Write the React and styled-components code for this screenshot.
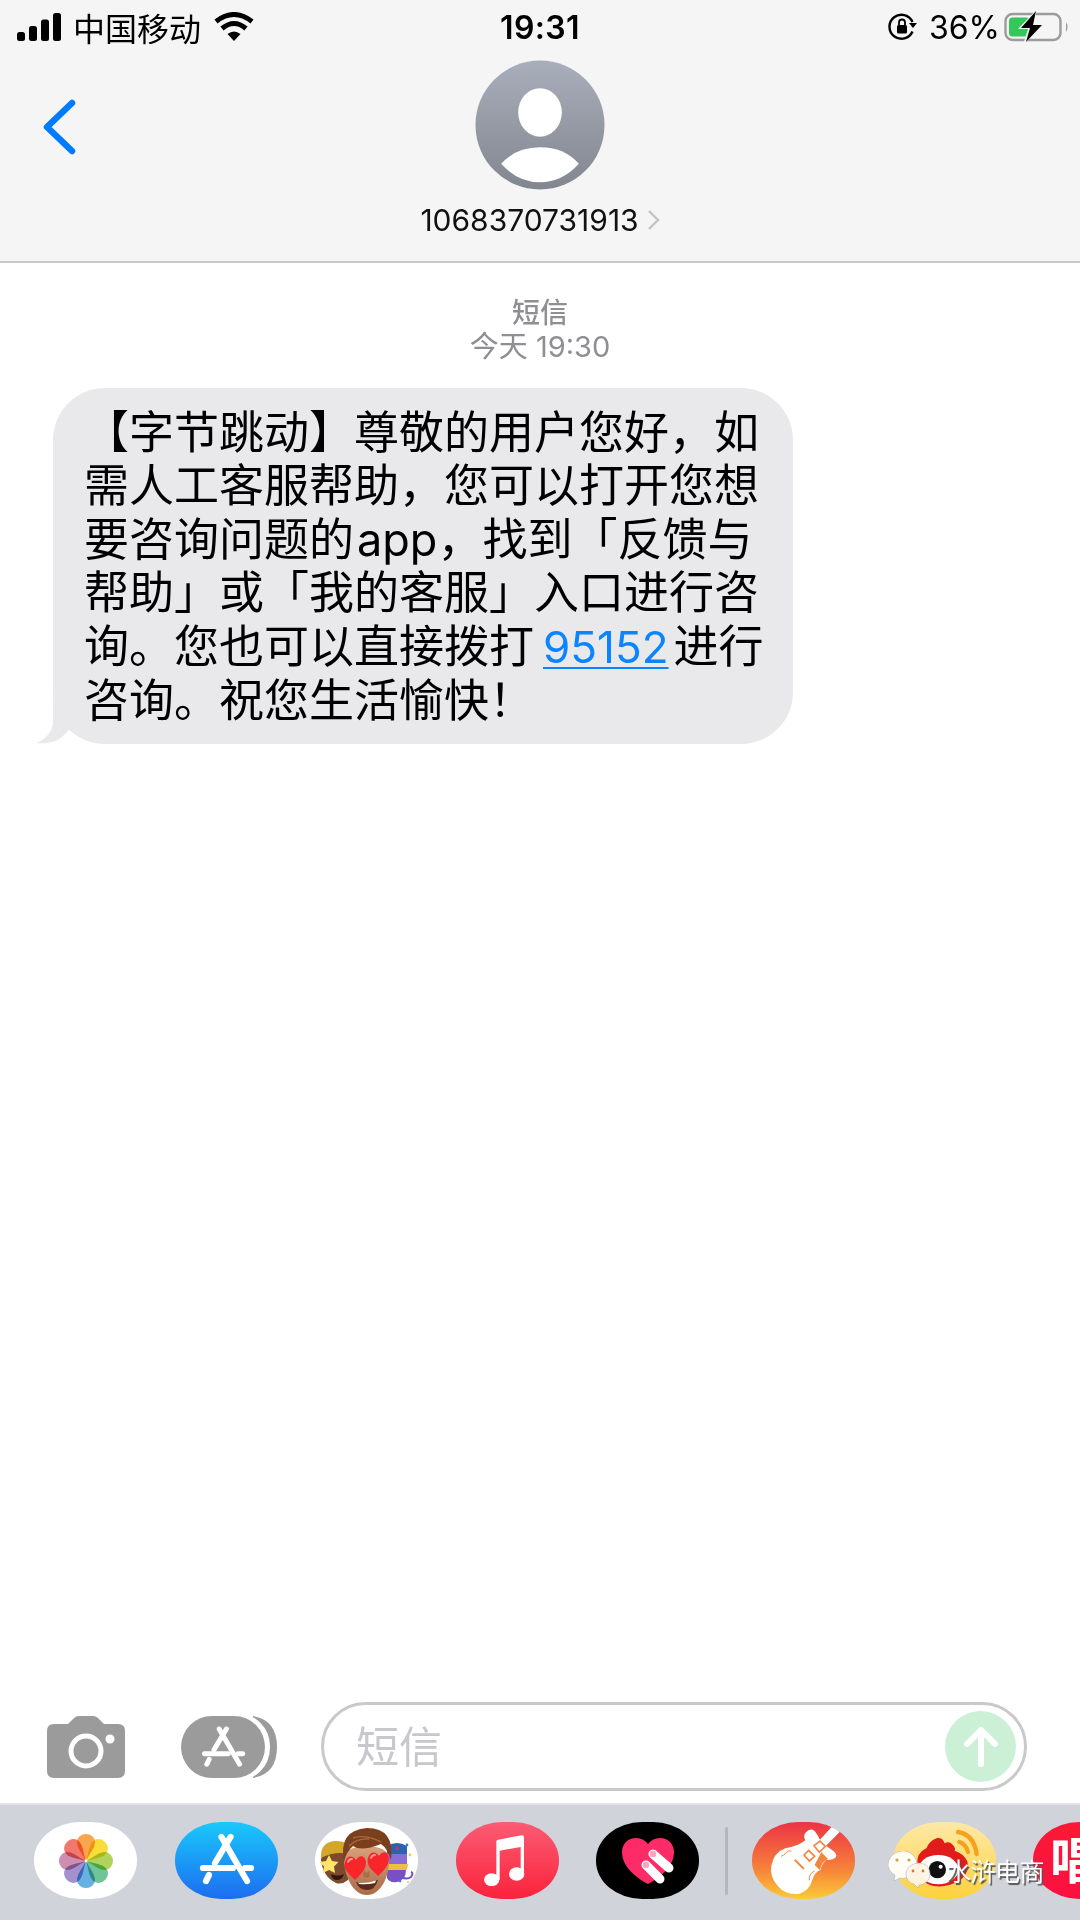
import React from 'react'
import styled, { createGlobalStyle } from 'styled-components'

const GlobalStyle = createGlobalStyle`
  html, body {
    margin: 0;
    padding: 0;
    background: #fff;
    font-family: Inter, "Noto Sans CJK SC", sans-serif;
  }
`

const Screen = styled.div`
  width: 1080px;
  height: 1920px;
  display: flex;
  flex-direction: column;
  overflow: hidden;
  position: relative;
  background: #fff;
`

const Header = styled.header`
  height: 261px;
  flex: none;
  background: #f5f5f5;
  border-bottom: 2px solid #c9c9c9;
  display: flex;
  flex-direction: column;
`

const StatusBar = styled.div`
  height: 54px;
  padding: 0 10px;
  display: grid;
  grid-template-columns: 1fr auto 1fr;
  align-items: center;
  color: #000;
`

const StatusLeft = styled.div`
  display: flex;
  align-items: center;
  padding-left: 7px;
`

const StatusRight = styled.div`
  display: flex;
  align-items: center;
  justify-content: flex-end;
`

const Carrier = styled.span`
  font: 400 32px "Noto Sans CJK SC", sans-serif;
  line-height: 54px;
  margin: 0 13px 0 11px;
`

const Clock = styled.span`
  font: 600 32px Inter, sans-serif;
  letter-spacing: 0.4px;
`

const Percent = styled.span`
  font: 400 32px Inter, sans-serif;
  margin: 0 4px 0 11px;
`

const ContactBar = styled.div`
  position: relative;
  flex: 1;
  display: flex;
  flex-direction: column;
  align-items: center;
`

const BackButton = styled.svg`
  position: absolute;
  left: 40px;
  top: 44px;
`

const Avatar = styled.svg`
  margin-top: 6px;
  display: block;
`

const ContactName = styled.div`
  display: flex;
  align-items: center;
  gap: 8px;
  margin-top: 12px;
  font: 400 30px Inter, sans-serif;
  color: #111;
  line-height: 36px;
`

const Messages = styled.main`
  flex: 1;
  padding-top: 33px;
`

const Meta = styled.div`
  margin-bottom: 24px;
  text-align: center;
  color: #8e8e93;
  line-height: 34px;
`

const MetaKind = styled.div`
  font-size: 28px;
  font-weight: 500;
`

const MetaTime = styled.div`
  font-size: 29px;
`

const BubbleRow = styled.div`
  padding-left: 53px;
`

const Bubble = styled.div`
  position: relative;
  width: 677px;
  padding: 18px 32px 17px 31px;
  background: #e9e9eb;
  border-radius: 52px;
  font: 400 45px/53.4px Inter, "Noto Sans CJK SC", sans-serif;
  color: #000;
`

const Line = styled.div`
  white-space: nowrap;
`

const Latin = styled.span`
  margin-left: 3px;
`

const Tail = styled.svg`
  position: absolute;
  left: -16px;
  bottom: 0;
`

const PhoneLink = styled.a`
  color: #0a84ff;
  font-size: 44px;
  margin: 0 5px 0 9px;
  text-decoration: underline;
  text-decoration-thickness: 2px;
  text-underline-offset: 4px;
`

const Composer = styled.div`
  flex: none;
  height: 101px;
  padding: 0 0 12px 47px;
  box-sizing: border-box;
  display: flex;
  align-items: center;
`

const ComposerIcon = styled.svg`
  display: block;
  flex: none;
  margin-right: ${p => p.$gap}px;
`

const InputPill = styled.div`
  width: 706px;
  height: 89px;
  box-sizing: border-box;
  border: 3px solid #c9c9c9;
  border-radius: 45px;
  display: flex;
  align-items: center;
  justify-content: space-between;
  padding: 0 8px 0 32px;
`

const Placeholder = styled.span`
  font: 400 43px/1 "Noto Sans CJK SC", sans-serif;
  color: #c7c7cc;
  margin-top: -4px;
`

const SendButton = styled.div`
  width: 71px;
  height: 71px;
  border-radius: 50%;
  background: #ccf0d6;
  display: flex;
  align-items: center;
  justify-content: center;
`

const Dock = styled.nav`
  flex: none;
  height: 117px;
  box-sizing: border-box;
  background: #d0d3d9;
  border-top: 2px solid #e3e4e8;
  padding: 17px 0 0 34px;
  display: flex;
  align-items: flex-start;
  gap: 37.5px;
`

const AppIcon = styled.div`
  position: relative;
  flex: none;
  width: 103px;
  height: 77px;
  border-radius: 46px / 38px;
  background: ${p => p.$bg};
  overflow: hidden;
  display: flex;
  align-items: center;
  justify-content: center;
`

const DockDivider = styled.div`
  flex: none;
  width: 3px;
  height: 68px;
  margin: 5px -13.5px 0 -11.5px;
  background: #b4b6bb;
  border-radius: 2px;
`

const SingGlyph = styled.span`
  position: absolute;
  left: 17px;
  top: 3px;
  font: 700 50px/1.3 "Noto Sans CJK SC", sans-serif;
  color: #fff;
`

const Petal = styled.path`
  mix-blend-mode: multiply;
  opacity: 0.92;
`

const Watermark = styled.div`
  position: absolute;
  left: 888px;
  top: 1851px;
  display: flex;
  align-items: center;
`

const WatermarkText = styled.span`
  font: 400 25px "Noto Sans CJK SC", sans-serif;
  color: #fff;
  margin-left: 14px;
  letter-spacing: -0.5px;
  text-shadow: 1.5px 1.5px 1px #555;
  white-space: nowrap;
`

function SignalIcon() {
  return (
    <svg width="45" height="28" viewBox="0 0 45 28">
      <rect x="0" y="19" width="8" height="9" rx="2.5" fill="#000" />
      <rect x="12" y="13" width="8" height="15" rx="2.5" fill="#000" />
      <rect x="24" y="6.5" width="8" height="21.5" rx="2.5" fill="#000" />
      <rect x="36" y="0" width="8" height="28" rx="2.5" fill="#000" />
    </svg>
  )
}

function WifiIcon() {
  return (
    <svg width="40" height="30" viewBox="0 0 40 30">
      <path d="M20 29 L13.5 22 Q20 17 26.5 22 Z" fill="#000" />
      <path d="M8 16.5 Q20 6.5 32 16.5" fill="none" stroke="#000" strokeWidth="5" />
      <path d="M2 9.5 Q20 -4.5 38 9.5" fill="none" stroke="#000" strokeWidth="5" />
    </svg>
  )
}

function RotationLockIcon() {
  return (
    <svg width="30" height="28" viewBox="0 0 30 28">
      <path d="M24.5 18.5 A12 12 0 1 1 24.5 9" fill="none" stroke="#000" strokeWidth="2.4" />
      <path d="M21 10 L29 10 L25 15 Z" fill="#000" />
      <rect x="9" y="12" width="10" height="8.5" rx="1.5" fill="#000" />
      <path d="M11 12 V9.5 a3 3 0 0 1 6 0 V12" fill="none" stroke="#000" strokeWidth="1.8" />
    </svg>
  )
}

function BatteryIcon() {
  return (
    <svg width="66" height="32" viewBox="0 0 66 32">
      <rect x="1.5" y="3" width="55" height="26" rx="7" fill="none" stroke="#9b9b9b" strokeWidth="2.4" />
      <rect x="5" y="6.5" width="21" height="19" rx="3.5" fill="#34c759" />
      <path d="M62 11 q3 5 0 10 Z" fill="#9b9b9b" />
      <path d="M33 -2 L14 18 H24 L19 34 L40 13 H30 Z" fill="#f5f5f5" />
      <path d="M32 0 L17 17 H26 L22 31 L38 14 H29 Z" fill="#000" />
    </svg>
  )
}

function AvatarIcon() {
  return (
    <Avatar width="130" height="130" viewBox="0 0 134 134">
      <defs>
        <linearGradient id="avatarFill" x1="0" y1="0" x2="0" y2="1">
          <stop offset="0" stopColor="#a9aebb" />
          <stop offset="1" stopColor="#82868f" />
        </linearGradient>
      </defs>
      <circle cx="67" cy="67" r="66.5" fill="url(#avatarFill)" />
      <ellipse cx="67" cy="54" rx="22.5" ry="25" fill="#fff" />
      <path d="M27 107 Q42 90 67 90 Q92 90 107 107 Q90 126 67 126 Q44 126 27 107 Z" fill="#fff" />
    </Avatar>
  )
}

function AppStoreStrokes() {
  return (
    <g fill="none" stroke="#fff" strokeWidth="6.2" strokeLinecap="round">
      <path d="M46.5 15 L72 59" />
      <path d="M55.5 15 L40 41" />
      <path d="M34 53 L31 59" />
      <path d="M28 46 H58" />
      <path d="M70 46 H76" />
    </g>
  )
}

function AppStoreGlyph() {
  return (
    <svg width="103" height="77" viewBox="0 0 103 77">
      <AppStoreStrokes />
    </svg>
  )
}

function PhotosGlyph() {
  const petals = [
    ['#f9a03f', 0],
    ['#f7dc2a', 45],
    ['#a8d04f', 90],
    ['#63c08e', 135],
    ['#5aa9e0', 180],
    ['#9a88c8', 225],
    ['#c884aa', 270],
    ['#f06c63', 315],
  ]
  return (
    <svg width="56" height="56" viewBox="-28 -28 56 56">
      {petals.map(([color, angle]) => (
        <Petal
          key={angle}
          d="M0 0 C-4 -8 -9 -13 -9 -19 A9 8 0 0 1 9 -19 C9 -13 4 -8 0 0 Z"
          fill={color}
          transform={`rotate(${angle})`}
        />
      ))}
      <circle r="1.4" fill="#fff" />
    </svg>
  )
}

function MemojiGlyph() {
  return (
    <svg width="103" height="77" viewBox="0 0 103 77">
      <defs>
        <linearGradient id="skin" x1="0" y1="0" x2="0" y2="1">
          <stop offset="0" stopColor="#d8a27c" />
          <stop offset="1" stopColor="#a86c48" />
        </linearGradient>
      </defs>
      {/* genie on the right */}
      <path d="M72 24 q10 -6 20 0 v8 h-20 Z" fill="#2f62ad" />
      <circle cx="82" cy="26" r="1.6" fill="#d8304a" />
      <path d="M73 32 h19 v10 h-19 Z" fill="#8a6cd8" />
      <path d="M73 42 h20 l-1 6 h-19 Z" fill="#ecc03f" />
      <path d="M72 48 h19 q0 10 -9 12 q-8 1 -10 -4 Z" fill="#7a4fc4" />
      <path d="M86 55 q6 3 10 0 q3 -4 0 -5" fill="none" stroke="#7a4fc4" strokeWidth="2" />
      <circle cx="92" cy="23" r="1.4" fill="#3a7de0" />
      <circle cx="95" cy="33" r="1.4" fill="#f0d030" />
      <circle cx="85" cy="59" r="1.4" fill="#3a7de0" />
      <circle cx="93" cy="60" r="1" fill="#f0d030" />
      {/* face on the left */}
      <path d="M6 38 q0 -6 5 -10 h22 v30 q-6 5 -12 3 q-13 -6 -15 -23 Z" fill="#7c4a2c" />
      <path d="M6 36 q-1 -15 13 -17 q12 -1 16 6 l-1 7 q-14 -3 -28 4 Z" fill="#d2a72b" />
      <path d="M14 33 l3 6 l6.500 1 l-4.500 4.500 l1 6.500 l-6 -3 l-6 3 l1 -6.500 l-4.500 -4.500 l6.500 -1 Z" fill="#ffe36b" />
      <path d="M16 52 q7 3 13 0 q-2 6 -7 6 q-5 0 -6 -6 Z" fill="#2b1710" />
      {/* main face */}
      <path d="M29 36 C29 20 74 20 74 36 C75 54 66 73 52 73 C38 73 29 54 29 36 Z" fill="url(#skin)" />
      <path d="M29 40 Q23 8 52 6 Q80 6 76 38 Q72 26 66 22 Q46 30 38 24 Q31 30 29 40 Z" fill="#7a3f1d" />
      <path d="M38 16 Q50 12 66 20 M34 24 Q42 16 54 17" fill="none" stroke="#a8683a" strokeWidth="1.4" />
      <path d="M40 58 C34 52 28 48 30 40 C32 33 38 33 41 38 C44 32 51 33 51 41 C51 48 44 54 40 58 Z" fill="#f8262b" />
      <path d="M63 54 C57 48 51 44 53 36 C55 29 61 29 64 34 C67 28 74 29 74 37 C74 44 67 50 63 54 Z" fill="#f8262b" />
      <path d="M33 40 q1 -3 4 -3 M56 36 q1 -3 4 -3" fill="none" stroke="#ffa0a0" strokeWidth="1.8" strokeLinecap="round" />
      <path d="M49 48 q3 6 5 0 l1 6 q-3 3 -7 0 Z" fill="#a86c48" />
      <path d="M41 60 q11 2 22 -2 q-3 10 -11 10 q-8 0 -11 -8 Z" fill="#5e2a1c" />
      <path d="M43 60.500 q9 1 18 -2 l-1 2.500 q-8 2 -16 1 Z" fill="#fff" />
    </svg>
  )
}

function MusicGlyph() {
  return (
    <svg width="103" height="77" viewBox="21 22 309 231">
      <path d="M142 80 Q142 76 148 75 L218 62 Q225 61 225 68 V178 H215 V97 L152 108 V195 H142 Z" fill="#fff" />
      <ellipse cx="128" cy="195" rx="23" ry="19" fill="#fff" />
      <ellipse cx="203" cy="178" rx="23" ry="20" fill="#fff" />
    </svg>
  )
}

function HeartFingersGlyph() {
  return (
    <svg width="52" height="46" viewBox="0 0 52 46">
      <path d="M26 46 C13 39 0 28 0 14 C0 6 6 0 14 0 C19 0 23 2 26 6 C29 2 33 0 38 0 C46 0 52 6 52 14 C52 28 39 39 26 46 Z" fill="#ff2a68" />
      <path d="M31 16 L47 30" stroke="#fff" strokeWidth="9" strokeLinecap="round" />
      <path d="M24 27 L38 41" stroke="#fff" strokeWidth="9" strokeLinecap="round" />
      <circle cx="31" cy="16" r="3.2" fill="#f6a6bf" />
      <circle cx="24" cy="27" r="3.2" fill="#f6a6bf" />
    </svg>
  )
}

function GuitarGlyph() {
  return (
    <svg width="103" height="77" viewBox="18 21 309 231">
      <path
        d="M262 30 L284 48 L240 92 L262 108 Q274 118 270 126 Q262 136 240 135 Q226 150 224 165 Q206 170 198 198 Q190 226 160 236 Q120 242 96 214 Q70 184 76 152 Q84 112 118 100 Q156 94 178 76 Q170 62 180 52 Q192 38 206 48 Q214 58 222 74 Z"
        fill="#fff"
      />
      <path d="M204 92 L222 78 L238 94 L220 112 Z M174 120 L188 106 L206 124 L190 138 Z" fill="none" stroke="#f4853b" strokeWidth="5" />
      <path d="M226 112 L246 132 Q226 140 222 166 L206 150 Z" fill="#f4853b" />
      <path d="M148 136 L172 160" stroke="#f4853b" strokeWidth="6" strokeLinecap="round" />
      <path d="M105 124 Q112 122 122 112 Q128 106 136 108 M190 196 Q188 176 206 168" fill="none" stroke="#f4853b" strokeWidth="3" />
    </svg>
  )
}

function WeiboGlyph() {
  return (
    <svg width="103" height="77" viewBox="39 22 309 231">
      <path
        d="M112 150 Q108 115 140 100 Q148 78 172 70 Q188 68 194 86 Q206 78 218 90 Q228 100 224 108 Q250 116 262 140 Q270 176 236 200 Q200 220 160 214 Q116 204 112 150 Z"
        fill="#e21b1b"
      />
      <ellipse cx="175" cy="165" rx="60" ry="44" fill="#fff" />
      <circle cx="172" cy="165" r="26" fill="#111" />
      <circle cx="182" cy="156" r="6" fill="#fff" />
      <path d="M234 52 Q282 60 290 118" fill="none" stroke="#f7a11c" strokeWidth="13" strokeLinecap="round" />
      <path d="M238 82 Q258 88 264 112" fill="none" stroke="#f7a11c" strokeWidth="13" strokeLinecap="round" />
    </svg>
  )
}

function WechatMark() {
  return (
    <svg width="44" height="38" viewBox="0 0 44 38">
      <path d="M0 14 C0 6 7 0 15 0 C23 0 29 6 29 14 L21 26 C18 27 15 28 12 27 L6 30 L7 24 C3 22 0 18 0 14 Z" fill="#fffdf6" stroke="#a5a5a5" strokeWidth="0.5" />
      <circle cx="9" cy="9" r="1.6" fill="#c9a444" />
      <circle cx="21" cy="9" r="1.6" fill="#c9a444" />
      <path d="M18 23 C18 17 24 12 31 12 C38 12 42 17 42 23 C42 30 36 34 31 34 L30 37 L26 33 C21 32 18 28 18 23 Z" fill="#fff4e6" fillOpacity="0.95" stroke="#a5a5a5" strokeWidth="0.5" />
      <circle cx="25" cy="20" r="1.4" fill="#d2793a" />
      <circle cx="35" cy="20" r="1.4" fill="#d2793a" />
    </svg>
  )
}

export default function App() {
  return (
    <Screen>
      <GlobalStyle />
      <Header>
        <StatusBar>
          <StatusLeft>
            <SignalIcon />
            <Carrier>中国移动</Carrier>
            <WifiIcon />
          </StatusLeft>
          <Clock>19:31</Clock>
          <StatusRight>
            <RotationLockIcon />
            <Percent>36%</Percent>
            <BatteryIcon />
          </StatusRight>
        </StatusBar>
        <ContactBar>
          <BackButton width="40" height="64" viewBox="0 0 40 64">
            <path d="M32 5 L7 29 L32 53" fill="none" stroke="#007aff" strokeWidth="6.5" strokeLinecap="round" strokeLinejoin="round" />
          </BackButton>
          <AvatarIcon />
          <ContactName>
            1068370731913
            <svg width="13" height="22" viewBox="0 0 13 22">
              <path d="M2 2 L11 11 L2 20" fill="none" stroke="#c4c4c6" strokeWidth="2.4" />
            </svg>
          </ContactName>
        </ContactBar>
      </Header>

      <Messages>
        <Meta>
          <MetaKind>短信</MetaKind>
          <MetaTime>今天 19:30</MetaTime>
        </Meta>
        <BubbleRow>
          <Bubble>
            <Line>【字节跳动】尊敬的用户您好，如</Line>
            <Line>需人工客服帮助，您可以打开您想</Line>
            <Line>要咨询问题的<Latin>app</Latin>，找到「反馈与</Line>
            <Line>帮助」或「我的客服」入口进行咨</Line>
            <Line>询。您也可以直接拨打<PhoneLink>95152</PhoneLink>进行</Line>
            <Line>咨询。祝您生活愉快！</Line>
            <Tail width="34" height="46" viewBox="0 0 34 46">
              <path d="M16 0 V24 C16 33 9 41 0 45 C10 46 20 44 26 38 L34 30 V0 Z" fill="#e9e9eb" />
            </Tail>
          </Bubble>
        </BubbleRow>
      </Messages>

      <Composer>
        <ComposerIcon $gap={56} width="78" height="62" viewBox="0 0 78 62">
          <path d="M7 8 H21 L27 2 Q29 0 32 0 H46 Q49 0 51 2 L57 8 H71 Q78 8 78 15 V55 Q78 62 71 62 H7 Q0 62 0 55 V15 Q0 8 7 8 Z" fill="#9b9b9b" />
          <circle cx="39" cy="35" r="15" fill="none" stroke="#fff" strokeWidth="5" />
          <circle cx="63" cy="23" r="4.5" fill="#fff" />
        </ComposerIcon>
        <ComposerIcon $gap={44} width="96" height="62" viewBox="0 0 96 62">
          <path d="M72 0 Q96 4 96 31 Q96 58 72 62 Z" fill="#9b9b9b" />
          <rect x="-4" y="-3" width="93" height="68" rx="33" fill="#fff" />
          <rect x="0" y="0" width="84" height="62" rx="31" fill="#9b9b9b" />
          <g transform="translate(1 1) scale(0.8)">
            <AppStoreStrokes />
          </g>
        </ComposerIcon>
        <InputPill>
          <Placeholder>短信</Placeholder>
          <SendButton>
            <svg width="36" height="42" viewBox="0 0 36 42">
              <path d="M18 38 V4 M4 18 L18 4 L32 18" fill="none" stroke="#fff" strokeWidth="6" strokeLinecap="round" strokeLinejoin="round" />
            </svg>
          </SendButton>
        </InputPill>
      </Composer>

      <Dock>
        <AppIcon $bg="#fff"><PhotosGlyph /></AppIcon>
        <AppIcon $bg="linear-gradient(#19c9fb, #1d6cf0)"><AppStoreGlyph /></AppIcon>
        <AppIcon $bg="#fff"><MemojiGlyph /></AppIcon>
        <AppIcon $bg="linear-gradient(#fb5c74, #fa233b)"><MusicGlyph /></AppIcon>
        <AppIcon $bg="#000"><HeartFingersGlyph /></AppIcon>
        <DockDivider />
        <AppIcon $bg="linear-gradient(#ec3346, #f6833a 62%, #fdcb36)"><GuitarGlyph /></AppIcon>
        <AppIcon $bg="linear-gradient(#fde9a8, #fdd23c)"><WeiboGlyph /></AppIcon>
        <AppIcon $bg="linear-gradient(#fb1a35, #fb1040)"><SingGlyph>唱</SingGlyph></AppIcon>
      </Dock>

      <Watermark>
        <WechatMark />
        <WatermarkText>水浒电商</WatermarkText>
      </Watermark>
    </Screen>
  )
}
